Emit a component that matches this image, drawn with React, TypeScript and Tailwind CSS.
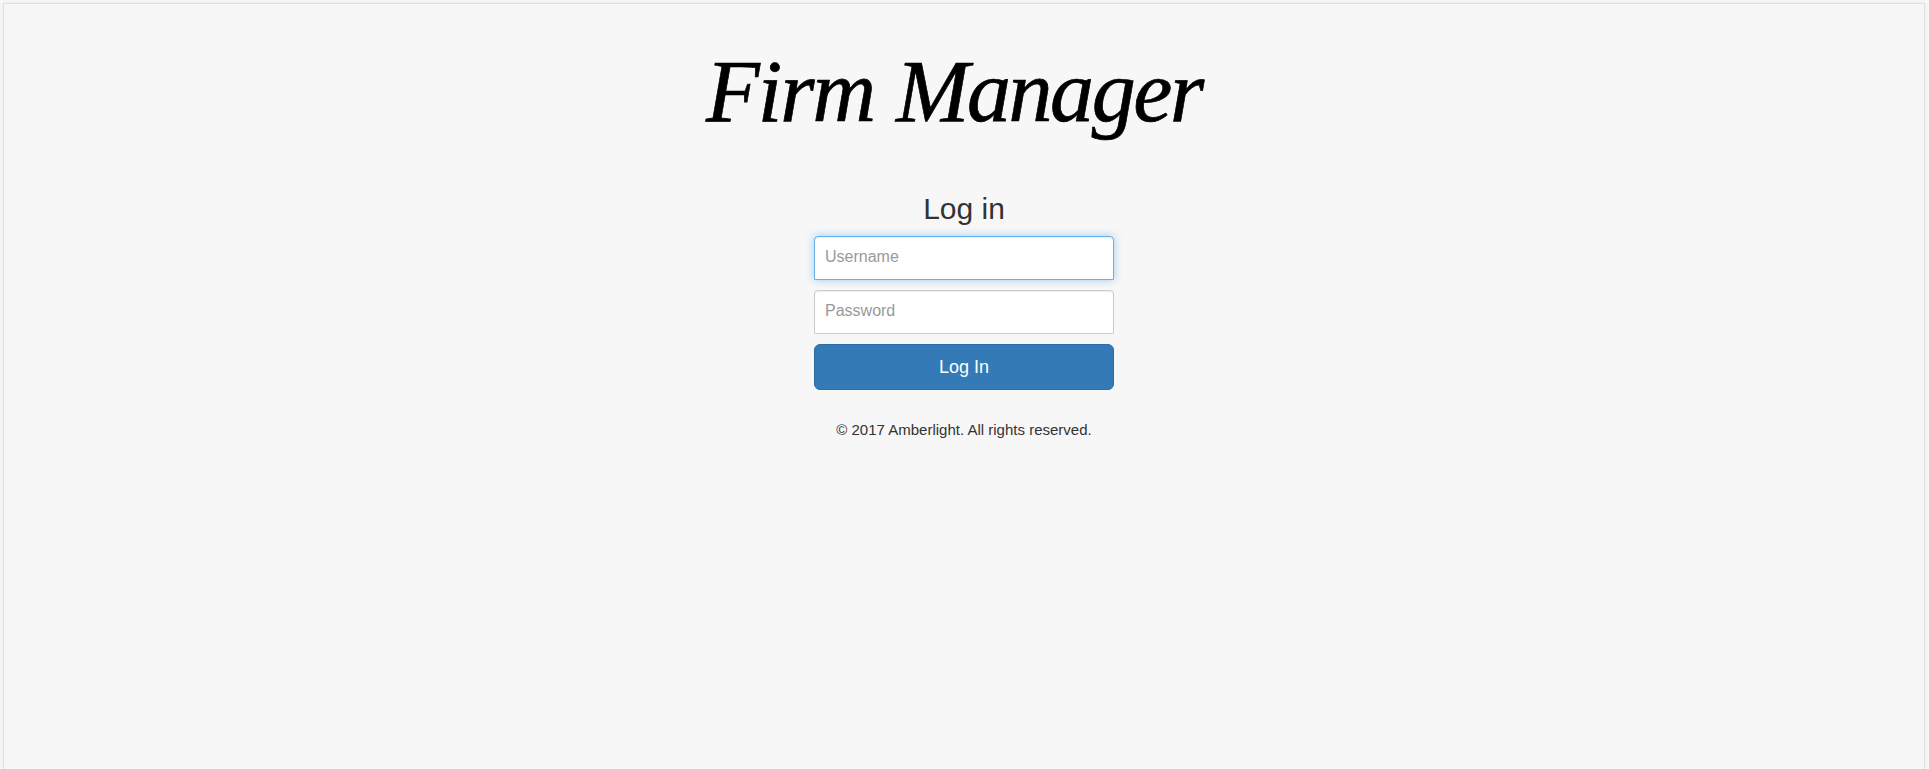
import React from 'react';

const fieldClass =
  'block h-11 w-full rounded-t-[4px] border bg-white px-2.5 pb-0.5 text-[16px] text-[#555555] outline-none placeholder:text-[#999999]';

function Logo() {
  return (
    <div className="flex h-[134px] w-[500px] items-start whitespace-nowrap font-['Monotype_Corsiva','URW_Chancery_L','Z003','Liberation_Serif',serif] text-[88px] leading-[98px] text-black italic [-webkit-text-stroke:0.7px_black]">
      <span className="w-[190px] tracking-[-2px]">Firm</span>{' '}
      <span className="tracking-[-2.4px]">Manager</span>
    </div>
  );
}

export default function App() {
  return (
    <div className="h-[769px] overflow-hidden bg-[#f7f7f7] px-[3px] pt-[3px] pr-[4px] font-['Liberation_Sans',Arial,sans-serif] text-[#333333]">
      <main className="flex h-[800px] flex-col items-center border border-[#e0e0e0] bg-[#f7f7f7] pt-[39px] shadow-[0_0_4px_rgba(0,0,0,0.06)]">
        <div className="-ml-[16px]">
          <Logo />
        </div>
        <form className="flex w-[300px] flex-col gap-2.5" onSubmit={(e) => e.preventDefault()}>
          <h1 className="pt-[14px] text-center text-[30px] leading-[35px]">Log in</h1>
          <input
            className={`${fieldClass} border-[#66afe9] shadow-[inset_0_1px_1px_rgba(0,0,0,0.075),0_0_8px_rgba(102,175,233,0.6)]`}
            type="text"
            placeholder="Username"
            aria-label="Username"
          />
          <input
            className={`${fieldClass} border-[#cccccc] shadow-[inset_0_1px_1px_rgba(0,0,0,0.075)]`}
            type="password"
            placeholder="Password"
            aria-label="Password"
          />
          <button className="h-[46px] rounded-[6px] border border-[#2e6da4] bg-[#337ab7] text-[18px] text-white" type="submit">
            Log In
          </button>
        </form>
        <footer className="mt-[30px] text-[15px] leading-5">© 2017 Amberlight. All rights reserved.</footer>
      </main>
    </div>
  );
}
